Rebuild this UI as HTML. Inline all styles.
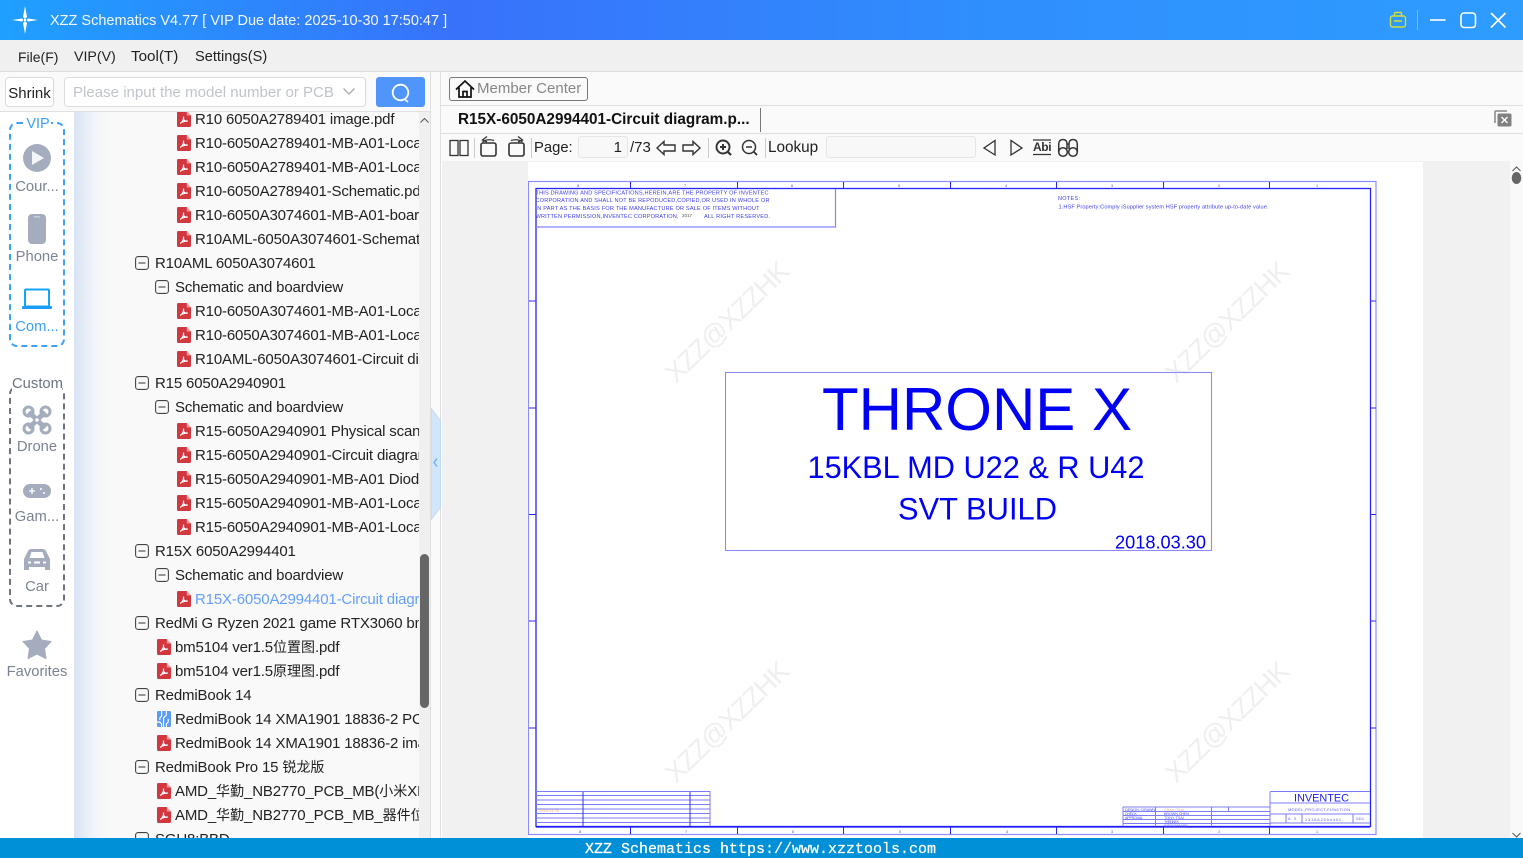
<!DOCTYPE html>
<html><head><meta charset="utf-8"><style>
*{box-sizing:border-box}
html,body{margin:0;padding:0;width:1523px;height:858px;overflow:hidden;background:#fff;font-family:"Liberation Sans","Noto Sans CJK SC",sans-serif;color:#222}
.a{position:absolute}
.t{position:absolute;white-space:nowrap;line-height:20px;height:20px}
#title{left:0;top:0;width:1523px;height:40px;background:linear-gradient(90deg,#1fa0ff 0,#3872fb 30%,#2f8ffd 65%,#2e9cff 100%)}
#menu{left:0;top:40px;width:1523px;height:32px;background:#f0f0f0;border-bottom:1px solid #dcdcdc}
#menu span{position:absolute;top:7px;line-height:20px;color:#222;white-space:nowrap}
#tree{left:74px;top:112px;width:356px;height:726px;background:linear-gradient(90deg,#d8e3f4 0,#f1f4f9 20px,#f9f9f9 36px)}
#rows{left:0;top:112px;width:419px;height:726px;overflow:hidden}
.r{position:absolute;height:24px;line-height:26px;font-size:15px;letter-spacing:-.16px;white-space:nowrap;color:#222}
.r svg{position:absolute;top:4px;left:-18px;width:14px;height:16px}
.r.m svg{left:-20px;top:5px;width:14px;height:14px}
.r i{font-style:normal;font-size:14px;letter-spacing:0;line-height:0}
.side{left:0;width:74px;text-align:center;font-size:14.8px;color:#7b8394;line-height:20px;white-space:nowrap}
</style></head><body>
<svg width="0" height="0" style="position:absolute"><defs>
<symbol id="p" viewBox="0 0 15 16" preserveAspectRatio="none"><path d="M1.500 0H10.500L15 4.500V14.500A1.500 1.500 0 0 1 13.500 16H1.500A1.500 1.500 0 0 1 0 14.500V1.500A1.500 1.500 0 0 1 1.500 0Z" fill="#d2363f"/><path d="M10.500 0L15 4.500H10.500Z" fill="#ee9a9f"/><path d="M7 5.500C7.500 8 6 11 3.500 12.500M7 8.500C8 10 10 10.500 11.500 10M3.500 12.500C5.500 10.500 8 10 11.500 10" fill="none" stroke="#fff" stroke-width="1.300"/></symbol>
<symbol id="m" viewBox="0 0 14 14"><rect x=".6" y=".6" width="12.800" height="12.800" rx="2.500" fill="none" stroke="#444" stroke-width="1.100"/><path d="M3.500 7H10.500" stroke="#444" stroke-width="1.100"/></symbol>
</defs></svg>

<div class="a" id="title"></div>
<svg class="a" style="left:11px;top:5px" width="28" height="30" viewBox="0 0 28 30"><path d="M14 1L16 12L14 14L12 12ZM14 29L12 18L14 16L16 18ZM1 15L11 13.500L12.500 15L11 16.500ZM27 15L17 16.500L15.500 15L17 13.500Z" fill="#fff"/><circle cx="14" cy="15" r="1.200" fill="#fff"/></svg>
<div class="t" style="left:50px;top:11px;font-size:14.5px;color:#f2f7ff">XZZ Schematics V4.77 [ VIP Due date: 2025-10-30 17:50:47 ]</div>
<svg class="a" style="left:1385px;top:8px" width="135" height="24" viewBox="0 0 135 24"><g fill="none" stroke="#d3df3b" stroke-width="1.400"><rect x="5.500" y="8" width="15" height="11" rx="2"/><path d="M9.500 8V5.500Q9.500 4.500 10.500 4.500H15.500Q16.500 4.500 16.500 5.500V8M9 13H17"/></g><path d="M32.500 2V22" stroke="#7fb9f7"/><g fill="none" stroke="#fff" stroke-width="1.600"><path d="M45 12H60.500"/><rect x="76" y="5" width="14.500" height="14.500" rx="3"/><path d="M106 5L120.500 19.500M120.500 5L106 19.500"/></g></svg>

<div class="a" id="menu"><span style="left:18px;font-size:14px">File(F)</span><span style="left:74px;font-size:14.2px">VIP(V)</span><span style="left:131px;font-size:15.2px">Tool(T)</span><span style="left:195px;font-size:14.6px">Settings(S)</span></div>

<div class="a" style="left:0;top:72px;width:431px;height:40px;background:#fafafa;border-bottom:1px solid #e0e0e0"></div>
<div class="a" style="left:5px;top:77px;width:49px;height:30px;background:#fff;border:1px solid #dcdcdc;border-radius:4px;font-size:15px;line-height:31px;text-align:center;color:#222;white-space:nowrap">Shrink</div>
<div class="a" style="left:64px;top:77px;width:302px;height:30px;background:#fff;border:1px solid #dcdcdc;border-radius:4px"></div>
<div class="t" style="left:73px;top:83px;font-size:15.05px;color:#c0c4cc">Please input the model number or PCB</div>
<svg class="a" style="left:342px;top:86px" width="14" height="12"><path d="M1.500 2.500L7 8L12.500 2.500" fill="none" stroke="#a8abb2" stroke-width="1.300"/></svg>
<div class="a" style="left:376px;top:77px;width:49px;height:30px;background:#4f95fb;border-radius:3px"></div>
<svg class="a" style="left:390px;top:82px" width="22" height="22"><circle cx="10.500" cy="10.500" r="7.800" fill="none" stroke="#fff" stroke-width="1.800"/><path d="M15 17.500L18 20" stroke="#fff" stroke-width="1.500"/></svg>

<div class="a" style="left:0;top:112px;width:74px;height:726px;background:#fff"></div>
<div class="a" id="tree"></div>
<div class="a" style="left:419px;top:112px;width:12px;height:726px;background:#f0f0f0"></div>
<svg class="a" style="left:419px;top:115px" width="12" height="10"><path d="M1.500 7.500L5.500 3.500L9.500 7.500" fill="none" stroke="#555"/></svg>
<div class="a" style="left:420px;top:554px;width:9px;height:154px;background:#666;border-radius:5px"></div>

<div class="a" id="rows">
<div class="r" style="left:195px;top:-5px"><svg><use href="#p"/></svg>R10 6050A2789401 image.pdf</div>
<div class="r" style="left:195px;top:19px"><svg><use href="#p"/></svg>R10-6050A2789401-MB-A01-Location diagram.pdf</div>
<div class="r" style="left:195px;top:43px"><svg><use href="#p"/></svg>R10-6050A2789401-MB-A01-Location diagram.pdf</div>
<div class="r" style="left:195px;top:67px"><svg><use href="#p"/></svg>R10-6050A2789401-Schematic.pdf</div>
<div class="r" style="left:195px;top:91px"><svg><use href="#p"/></svg>R10-6050A3074601-MB-A01-boardview.pdf</div>
<div class="r" style="left:195px;top:115px"><svg><use href="#p"/></svg>R10AML-6050A3074601-Schematic.pdf</div>
<div class="r m" style="left:155px;top:139px"><svg><use href="#m"/></svg>R10AML 6050A3074601</div>
<div class="r m" style="left:175px;top:163px"><svg><use href="#m"/></svg>Schematic and boardview</div>
<div class="r" style="left:195px;top:187px"><svg><use href="#p"/></svg>R10-6050A3074601-MB-A01-Location diagram.pdf</div>
<div class="r" style="left:195px;top:211px"><svg><use href="#p"/></svg>R10-6050A3074601-MB-A01-Location diagram.pdf</div>
<div class="r" style="left:195px;top:235px"><svg><use href="#p"/></svg>R10AML-6050A3074601-Circuit diagram.pdf</div>
<div class="r m" style="left:155px;top:259px"><svg><use href="#m"/></svg>R15 6050A2940901</div>
<div class="r m" style="left:175px;top:283px"><svg><use href="#m"/></svg>Schematic and boardview</div>
<div class="r" style="left:195px;top:307px"><svg><use href="#p"/></svg>R15-6050A2940901 Physical scanning.pdf</div>
<div class="r" style="left:195px;top:331px"><svg><use href="#p"/></svg>R15-6050A2940901-Circuit diagram.pdf</div>
<div class="r" style="left:195px;top:355px"><svg><use href="#p"/></svg>R15-6050A2940901-MB-A01 Diode value.pdf</div>
<div class="r" style="left:195px;top:379px"><svg><use href="#p"/></svg>R15-6050A2940901-MB-A01-Location diagram.pdf</div>
<div class="r" style="left:195px;top:403px"><svg><use href="#p"/></svg>R15-6050A2940901-MB-A01-Location diagram.pdf</div>
<div class="r m" style="left:155px;top:427px"><svg><use href="#m"/></svg>R15X 6050A2994401</div>
<div class="r m" style="left:175px;top:451px"><svg><use href="#m"/></svg>Schematic and boardview</div>
<div class="r" style="left:195px;top:475px;color:#649ffb"><svg><use href="#p"/></svg>R15X-6050A2994401-Circuit diagram.pdf</div>
<div class="r m" style="left:155px;top:499px"><svg><use href="#m"/></svg>RedMi G Ryzen 2021 game RTX3060 bm5104</div>
<div class="r" style="left:175px;top:523px"><svg><use href="#p"/></svg>bm5104 ver1.5<i>位置图</i>.pdf</div>
<div class="r" style="left:175px;top:547px"><svg><use href="#p"/></svg>bm5104 ver1.5<i>原理图</i>.pdf</div>
<div class="r m" style="left:155px;top:571px"><svg><use href="#m"/></svg>RedmiBook 14</div>
<div class="r" style="left:175px;top:595px"><svg viewBox="0 0 15 16" preserveAspectRatio="none"><rect width="15" height="16" rx="1.500" fill="#5c9cf5"/><path d="M5 0V5L3 7V9M10 0V4L7 7V16M12 8V11L10 13V16M0 11H3L5 13V16" fill="none" stroke="#fff" stroke-width="1.200"/></svg>RedmiBook 14 XMA1901 18836-2 PCB.pcb</div>
<div class="r" style="left:175px;top:619px"><svg><use href="#p"/></svg>RedmiBook 14 XMA1901 18836-2 image.pdf</div>
<div class="r m" style="left:155px;top:643px"><svg><use href="#m"/></svg>RedmiBook Pro 15 <i>锐龙版</i></div>
<div class="r" style="left:175px;top:667px"><svg><use href="#p"/></svg>AMD_<i>华勤</i>_NB2770_PCB_MB(<i>小米</i>XMA2007).pdf</div>
<div class="r" style="left:175px;top:691px"><svg><use href="#p"/></svg>AMD_<i>华勤</i>_NB2770_PCB_MB_<i>器件位号图</i>.pdf</div>
<div class="r m" style="left:155px;top:715px"><svg><use href="#m"/></svg>SGU8:BBD</div>
</div>

<!-- left rail -->
<div class="a" style="left:9px;top:122px;width:56px;height:225px;border:2px dashed #3ea0fb;border-radius:8px"></div>
<div class="a" style="left:25px;top:114px;width:26px;height:20px;background:#fff;color:#3ea0fb;font-size:14.500px;line-height:20px;text-align:center">VIP</div>
<svg class="a" style="left:22px;top:143px" width="30" height="30"><circle cx="15" cy="15" r="14" fill="#a4acbd"/><path d="M10 8L22 15L10 22Z" fill="#f4f5f7"/></svg>
<div class="a side" style="top:177px">Cour...</div>
<svg class="a" style="left:27px;top:213px" width="20" height="32"><rect x="1" y="1" width="18" height="30" rx="4" fill="#a4acbd"/><rect x="7" y="3" width="6" height="1.500" fill="#c8cdd8"/></svg>
<div class="a side" style="top:247px">Phone</div>
<svg class="a" style="left:22px;top:288px" width="30" height="22"><rect x="3" y="1.500" width="24" height="17" rx="1" fill="none" stroke="#15a4f8" stroke-width="2"/><rect x="0" y="18" width="30" height="3" rx="1" fill="#1b9dfb"/></svg>
<div class="a side" style="top:317px;color:#3ea0fb">Com...</div>
<div class="a" style="left:9px;top:386px;width:56px;height:221px;border:2px dashed #6d7381;border-radius:8px"></div>
<div class="a" style="left:12px;top:374px;width:50px;height:20px;background:#fff;color:#6d7381;font-size:14.800px;line-height:20px;text-align:center">Custom</div>
<svg class="a" style="left:22px;top:405px" width="30" height="30" fill="none" stroke="#a4acbd"><path d="M7 7L23 23M23 7L7 23" stroke-width="5"/><circle cx="6.500" cy="6.500" r="4.500" stroke-width="3"/><circle cx="23.500" cy="6.500" r="4.500" stroke-width="3"/><circle cx="6.500" cy="23.500" r="4.500" stroke-width="3"/><circle cx="23.500" cy="23.500" r="4.500" stroke-width="3"/><circle cx="15" cy="15" r="2.500" fill="#fff" stroke-width="1.500"/></svg>
<div class="a side" style="top:437px">Drone</div>
<svg class="a" style="left:23px;top:484px" width="28" height="15"><rect width="28" height="14" rx="7" fill="#a4acbd"/><path d="M6 7H12M9 4V10" stroke="#fff" stroke-width="1.300"/><circle cx="18" cy="5" r="1" fill="#fff"/><circle cx="21" cy="9" r="1" fill="#fff"/></svg>
<div class="a side" style="top:507px">Gam...</div>
<svg class="a" style="left:23px;top:548px" width="28" height="23"><path d="M1 11L5 3Q6 1 8 1H20Q22 1 23 3L27 11V22H22V19H6V22H1Z" fill="#a4acbd"/><path d="M6.500 10L8.500 4H19.500L21.500 10Z" fill="#fff"/><path d="M5 14.500H8M20 14.500H23M11 14.500H17" stroke="#fff" stroke-width="2"/></svg>
<div class="a side" style="top:577px">Car</div>
<svg class="a" style="left:22px;top:630px" width="30" height="30"><path d="M15 1L19.500 10L29 11.500L22.500 18.500L24 28.500L15 24L6 28.500L7.500 18.500L1 11.500L10.500 10Z" fill="#a4acbd" stroke="#a4acbd" stroke-linejoin="round"/></svg>
<div class="a side" style="top:662px">Favorites</div>

<!-- divider -->
<div class="a" style="left:430px;top:72px;width:1px;height:766px;background:#dfdfdf"></div>
<div class="a" style="left:431px;top:72px;width:10px;height:766px;background:#fafafa"></div>
<div class="a" style="left:440px;top:72px;width:1px;height:766px;background:#dfdfdf"></div>
<svg class="a" style="left:431px;top:408px" width="10" height="112"><path d="M0 0L9.500 13V99L0 112Z" fill="#d2e6fb" stroke="#bcdcfa"/><path d="M6 50.500L3 54.500L6 58.500" fill="none" stroke="#69aef5" stroke-width="1.300"/></svg>

<!-- right -->
<div class="a" style="left:441px;top:72px;width:1082px;height:90px;background:#fafafa"></div>
<div class="a" style="left:441px;top:105px;width:1082px;height:1px;background:#dedede"></div>
<div class="a" style="left:441px;top:133px;width:1082px;height:1px;background:#dedede"></div>
<div class="a" style="left:449px;top:77px;width:139px;height:24px;border:1px solid #777;border-radius:3px;background:#fafafa"></div>
<svg class="a" style="left:455px;top:79px" width="20" height="20" fill="none" stroke="#111" stroke-width="1.700"><path d="M1 10.500L10 2L19 10.500M4 8.500V18H16V8.500M8 18V12.500H12V18"/></svg>
<div class="t" style="left:477px;top:79px;font-size:15px;color:#868686">Member Center</div>
<div class="t" style="left:458px;top:110px;font-size:15.3px;font-weight:bold;color:#111">R15X-6050A2994401-Circuit diagram.p...</div>
<div class="a" style="left:760px;top:108px;width:1px;height:24px;background:#777"></div>
<svg class="a" style="left:1493px;top:109px" width="20" height="20"><path d="M2 14V3Q2 2 3 2H14" fill="none" stroke="#888" stroke-width="1.500"/><rect x="4.500" y="4.500" width="14" height="13" rx="1.500" fill="#808080"/><path d="M8.500 8L14.500 14M14.500 8L8.500 14" stroke="#fff" stroke-width="1.400"/></svg>

<!-- toolbar -->
<svg class="a" style="left:441px;top:134px" width="660" height="28" fill="none" stroke="#333" stroke-width="1.300">
<rect x="9" y="6.500" width="8" height="15"/><rect x="19" y="6.500" width="8" height="15"/>
<path d="M33.500 4V24M90.500 4V24" stroke="#ccc" stroke-width="1"/>
<rect x="40" y="9" width="15" height="13" rx="2" stroke-width="1.600"/><path d="M41.500 8Q46 4.500 53 6.500M46 2.500L41.500 6L46 8" stroke-width="1.300"/>
<rect x="68" y="9" width="15" height="13" rx="2" stroke-width="1.600"/><path d="M81.500 8Q77 4.500 70 6.500M77 2.500L81.500 6L77 8" stroke-width="1.300"/>
<path d="M216 14L223 7.500V11H234V17H223V20.500Z" stroke-width="1.400"/>
<path d="M259 14L252 7.500V11H242V17H252V20.500Z" stroke-width="1.400"/>
<path d="M267.500 4V24M324.500 4V24" stroke="#ccc" stroke-width="1"/>
<circle cx="282" cy="13" r="6.500" stroke-width="1.900"/><path d="M287 18L290 21" stroke-width="2.200"/><path d="M279 13H285M282 10V16" stroke-width="2"/>
<circle cx="308" cy="13" r="6.500" stroke-width="1.500"/><path d="M313 18L316 21" stroke-width="1.800"/><path d="M305 13H311" stroke-width="1.500"/>
<path d="M554 6.500V21L543 14ZM570 6.500V21L581 14Z" stroke-width="1.300"/>
<path d="M592 6H610M592 20.500H610" stroke-width="1.200"/>
<circle cx="622" cy="18" r="4.300" stroke-width="1.500"/><circle cx="632" cy="18" r="4.300" stroke-width="1.500"/><path d="M617.700 18V10Q618 5.500 622 5.500Q626 5.500 626 10V15M636.300 18V10Q636 5.500 632 5.500Q628 5.500 628 10V15M626 10H628" stroke-width="1.500"/>
</svg>
<div class="t" style="left:534px;top:138px;font-size:14.8px;color:#222">Page:</div>
<div class="a" style="left:578px;top:136px;width:50px;height:22px;background:#f8f8f8;border:1px solid #e6e6e6;border-radius:3px;font-size:15px;line-height:21px;text-align:right;padding-right:5px;color:#222">1</div>
<div class="t" style="left:630px;top:138px;font-size:15px;color:#222">/73</div>
<div class="t" style="left:768px;top:138px;font-size:15.3px;color:#222">Lookup</div>
<div class="a" style="left:826px;top:136px;width:150px;height:22px;background:#f8f8f8;border:1px solid #e6e6e6;border-radius:3px"></div>
<div class="t" style="left:1033px;top:141px;font-size:12px;line-height:13px;height:13px;font-weight:bold;color:#333;letter-spacing:-.4px">Abi</div>

<!-- doc area -->
<div class="a" style="left:442px;top:161px;width:1068px;height:677px;background:#f1f1f1"></div>
<div class="a" style="left:1510px;top:161px;width:13px;height:677px;background:#f9f9f9"></div>
<svg class="a" style="left:1510px;top:164px" width="13" height="24"><path d="M2.500 7L6.500 3L10.500 7" fill="none" stroke="#555"/><ellipse cx="6.500" cy="14" rx="4.800" ry="6" fill="#666"/></svg>
<svg class="a" style="left:1510px;top:832px" width="13" height="6"><path d="M2.500 1L6.500 5L10.500 1" fill="none" stroke="#555"/></svg>

<svg class="a" style="left:528px;top:162px" width="895" height="676" viewBox="0 0 895 676" font-family="Liberation Sans, sans-serif">
<rect width="895" height="676" fill="#fff"/>
<g fill="#efefef" font-size="27">
<text transform="translate(148 222) rotate(-44)" textLength="160">XZZ@XZZHK</text>
<text transform="translate(648 222) rotate(-44)" textLength="160">XZZ@XZZHK</text>
<text transform="translate(148 622) rotate(-44)" textLength="160">XZZ@XZZHK</text>
<text transform="translate(648 622) rotate(-44)" textLength="160">XZZ@XZZHK</text>
</g>
<rect x=".5" y="19.500" width="847.500" height="653" fill="none" stroke="#8c8cff" stroke-width="1.200"/>
<rect x="8" y="26.500" width="834.500" height="638" fill="none" stroke="#2525f5" stroke-width="1.300"/>
<g stroke="#2a2af5" stroke-width="1">
<path d="M102.500 20V26M209.500 20V26M315.500 20V26M422.500 20V26M528.500 20V26M635.500 20V26M741.500 20V26M102.500 665V672M209.500 665V672M315.500 665V672M422.500 665V672M528.500 665V672M635.500 665V672M741.500 665V672"/>
<path d="M1 139H8M1 246H8M1 352.500H8M1 459H8M1 566H8M842 139H848M842 246H848M842 352.500H848M842 459H848M842 566H848"/>
</g>
<g fill="#4646f5" font-size="3.800" text-anchor="middle"><text x="50" y="25">8</text><text x="157" y="25">7</text><text x="264" y="25">6</text><text x="371" y="25">5</text><text x="478" y="25">4</text><text x="584" y="25">3</text><text x="691" y="25">2</text><text x="789" y="25">1</text><text x="52" y="671">8</text><text x="158" y="671">7</text><text x="265" y="671">6</text><text x="372" y="671">5</text><text x="479" y="671">4</text><text x="584" y="671">3</text><text x="691" y="671">2</text><text x="789" y="671">1</text></g>
<path d="M8 65H307.500V27" fill="none" stroke="#8585fb" stroke-width="1.200"/>
<g fill="#4040f5" font-size="5.600">
<text x="7.500" y="32.500" textLength="233">THIS DRAWING AND SPECIFICATIONS,HEREIN,ARE THE PROPERTY OF INVENTEC</text>
<text x="7.500" y="40" textLength="234">CORPORATION AND SHALL NOT BE REPODUCED,COPIED,OR USED IN WHOLE OR</text>
<text x="7.500" y="48" textLength="224">IN PART AS THE BASIS FOR THE MANUFACTURE OR SALE OF ITEMS WITHOUT</text>
<text x="7.500" y="56" textLength="143">WRITTEN PERMISSION,INVENTEC CORPORATION,</text>
<text x="154" y="55" font-size="4.500" fill="#555">2017</text>
<text x="176" y="56" textLength="66">ALL RIGHT RESERVED.</text>
<text x="530" y="38" textLength="22">NOTES:</text>
<text x="530.500" y="46.500" textLength="210">1.HSF Property:Comply iSupplier system HSF property attribute up-to-date value.</text>
</g>
<rect x="197.500" y="210.500" width="486" height="178" fill="none" stroke="#8c8cf8" stroke-width="1.100"/>
<g fill="#0000f5">
<text x="294" y="268" font-size="60" textLength="310" lengthAdjust="spacingAndGlyphs">THRONE X</text>
<text x="279.500" y="316" font-size="31.500" textLength="337" lengthAdjust="spacingAndGlyphs">15KBL MD U22 &amp; R U42</text>
<text x="370" y="357.500" font-size="31.500" textLength="159" lengthAdjust="spacingAndGlyphs">SVT BUILD</text>
<text x="587" y="386.500" font-size="18.500" textLength="91" lengthAdjust="spacingAndGlyphs">2018.03.30</text>
</g>
<g fill="none" stroke="#7c7cfa" stroke-width="1">
<path d="M8 629.500H182V665M8 633.500H182M8 638H182M8 642.500H182M8 647H182M8 651.500H182M8 656H182M8 660.500H182"/>
<path d="M55 630V665M162 630V665" stroke="#3030f5"/>
<path d="M595 645H742M595 649.500H742M595 653.500H742M595 657.500H742M595 661.500H742M595 645V665M627.500 645V665M683.500 645V665M700.500 645V650" />
<path d="M742 629.500H842M742 641H842M742 652H842M742 661H842M742 630V665M758 652V661M774 652V661M825 652V661"/>
</g>
<path d="M8 665H842" stroke="#1515f5" stroke-width="1.200" fill="none"/>
<text x="766" y="639.500" font-size="11" fill="#2222f5" textLength="55" lengthAdjust="spacingAndGlyphs">INVENTEC</text>
<g fill="#5050f5" font-size="3.800">
<text x="760" y="649" textLength="62">MODEL,PROJECT,FUNCTION</text>
<text x="11" y="650" fill="#f5b070" textLength="20">2018.03.30</text>
<text x="597" y="649" textLength="30">DESIGN / DRAWN</text>
<text x="597" y="653" textLength="12">CHECK</text>
<text x="597" y="657" textLength="18">APPROVAL</text>
<text x="636" y="649" fill="#f5b070" textLength="20">Chen/Tsai</text>
<text x="636" y="653" textLength="25">BROWN CHEN</text>
<text x="636" y="657" textLength="20">TONY TSAI</text>
<text x="636" y="661" textLength="15">THRONEX</text>
<text x="636" y="665" textLength="24">6050A2994401</text>
<text x="760" y="658" textLength="8">A3</text>
<text x="777" y="659" textLength="36">1310A2994401</text>
<text x="828" y="658" textLength="8">SD1</text>
</g>
</svg>

<div class="a" style="left:0;top:838px;width:1523px;height:20px;background:#0090d8"></div>
<div class="t" style="left:585px;top:840px;font-family:'Liberation Mono',monospace;font-size:15px;color:#fff;-webkit-text-stroke:.25px #fff">XZZ Schematics https://www.xzztools.com</div>
</body></html>
